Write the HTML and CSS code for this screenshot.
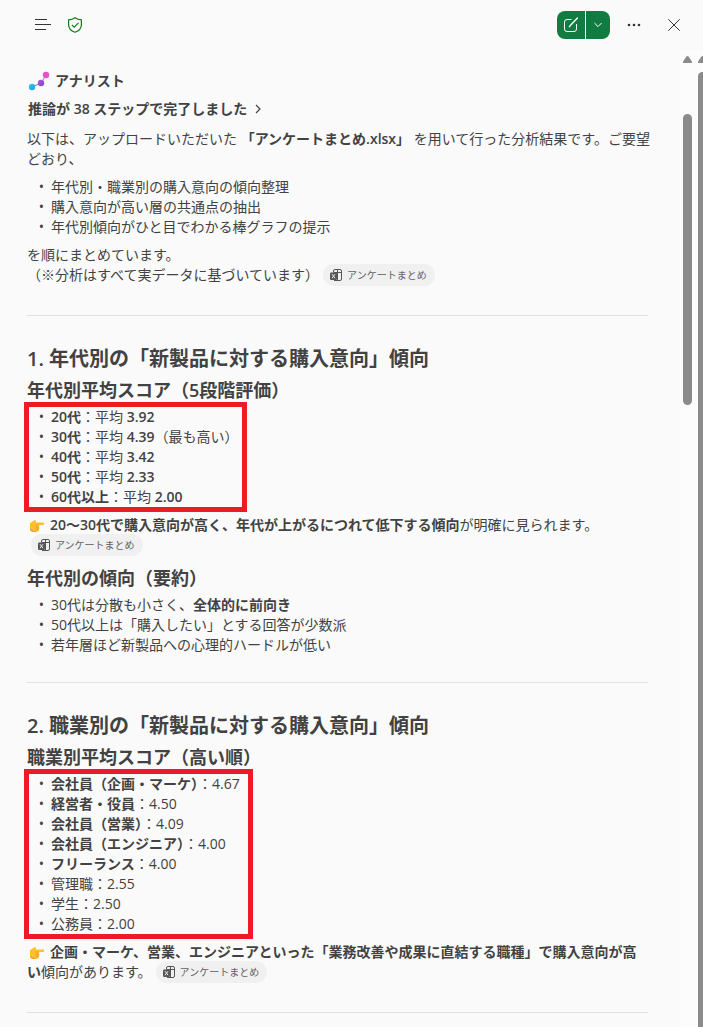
FILE: index.html
```html
<!DOCTYPE html>
<html lang="ja">

<head>
    <meta charset="UTF-8">
    <meta name="viewport" content="width=device-width, initial-scale=1.0">
    <title>アナリスト</title>
    <link rel="stylesheet" href="styles.css">
</head>

<body>
    <!-- Shared icons -->
    <svg class="icon-defs" aria-hidden="true">
        <symbol id="icon-excel" viewBox="0 0 12 12">
            <path d="M3.500 3V2a1.500 1.500 0 0 1 1.500-1.500h5A1.500 1.500 0 0 1 11.500 2v8a1.500 1.500 0 0 1-1.500 1.500H4M7.500.5v11M3.500 3.500h8" fill="none" stroke="#555" />
            <rect x="0" y="3.500" width="7" height="7.500" rx="1.200" fill="#555" />
            <path d="M2 5.200l3 4M5 5.200l-3 4" stroke="#f0f0f0" fill="none" />
        </symbol>
        <symbol id="icon-point" viewBox="0 0 16 14">
            <path d="M1 4.200C2.600 3.400 4 1.800 5.500 1.300c1-.3 1.700.2 1.500 1L6.700 3.400H14a1.300 1.300 0 0 1 0 2.600H9.500c1 .3 1.200 1.500.4 2.100.8.6.7 1.700-.1 2.100.5.8.1 1.900-.9 2-.9.6-2 .8-3.400.8C3.300 13 1.800 12 1 11z" fill="#fdc02f" />
            <path d="M9.500 6H6.300M9.900 8.100H6.600M9.800 10.200H6.600" stroke="#ed8f24" stroke-width=".8" fill="none" />
            <path d="M1 11c.8 1 2.300 2 4.500 2 1.400 0 2.500-.2 3.400-.8-3 .2-5.500 0-7.900-2.600z" fill="#f59a2c" />
        </symbol>
    </svg>

    <div class="page">
        <header class="toolbar">
            <button type="button" class="icon-btn" aria-label="メニュー">
                <svg width="16" height="12" viewBox="0 0 16 12">
                    <path d="M0 .5h12M0 5.500h16M0 10.500h11" stroke="#333" fill="none" />
                </svg>
            </button>
            <button type="button" class="icon-btn" aria-label="保護">
                <svg width="14" height="16" viewBox="0 0 14 16">
                    <path d="M7 .7c1.800 1.300 3.900 2 6.400 2.100v5c0 3.500-2.200 6-6.400 7.500C2.800 13.800.6 11.300.6 7.800v-5C3.100 2.700 5.200 2 7 .7z" stroke="#107c10" stroke-width="1.200" fill="none" />
                    <path d="M4 8l2.200 2.200L10.500 5.800" stroke="#107c10" stroke-width="1.100" fill="none" />
                </svg>
            </button>
            <div class="spacer"></div>
            <div class="split-btn">
                <button type="button" class="split-main" aria-label="新しいチャット">
                    <svg width="16" height="16" viewBox="0 0 16 16">
                        <path d="M8.500 2.500H4A2.500 2.500 0 0 0 1.500 5v7A2.500 2.500 0 0 0 4 14.500h7a2.500 2.500 0 0 0 2.500-2.500V7" stroke="#fff" fill="none" />
                        <path d="M14.500 1L7.500 8.200l-1.200 1.600" stroke="#fff" stroke-width="1.300" stroke-linecap="round" fill="none" />
                    </svg>
                </button>
                <button type="button" class="split-more" aria-label="その他">
                    <svg width="8" height="6" viewBox="0 0 8 6">
                        <path d="M.4 1L4 4.600 7.600 1" stroke="#fff" fill="none" />
                    </svg>
                </button>
            </div>
            <button type="button" class="icon-btn dots-btn" aria-label="オプション">
                <svg width="14" height="4" viewBox="0 0 14 4">
                    <circle cx="2" cy="2" r="1.300" fill="#333" />
                    <circle cx="7" cy="2" r="1.300" fill="#333" />
                    <circle cx="12" cy="2" r="1.300" fill="#333" />
                </svg>
            </button>
            <button type="button" class="icon-btn" aria-label="閉じる">
                <svg width="12" height="12" viewBox="0 0 12 12">
                    <path d="M.3.3l11.400 11.400M11.700.3L.3 11.700" stroke="#333" fill="none" />
                </svg>
            </button>
        </header>

        <div class="body-row">
            <main class="message">
                <div class="agent">
                    <svg width="22" height="20" viewBox="0 0 22 20">
                        <defs>
                            <linearGradient id="blue" x1="0" y1="0" x2="1" y2="1">
                                <stop offset="0" stop-color="#35c8e8" />
                                <stop offset="1" stop-color="#1d9fe0" />
                            </linearGradient>
                            <linearGradient id="purple" x1="0" y1="0" x2="1" y2="1">
                                <stop offset="0" stop-color="#b658e0" />
                                <stop offset="1" stop-color="#7b3fd0" />
                            </linearGradient>
                        </defs>
                        <path d="M4 16l9-4 5-8" stroke="#8a8a8a" fill="none" />
                        <circle cx="4" cy="16" r="3.200" fill="url(#blue)" />
                        <circle cx="13" cy="12" r="3.200" fill="url(#purple)" />
                        <circle cx="18" cy="4" r="3.200" fill="#e651cf" />
                    </svg>
                    <span>アナリスト</span>
                </div>
                <button type="button" class="reasoning">
                    <span>推論が 38 ステップで完了しました</span>
                    <svg width="6" height="10" viewBox="0 0 6 10">
                        <path d="M1 1l4 4-4 4" stroke="#424242" stroke-width="1.200" fill="none" />
                    </svg>
                </button>

                <p>以下は、アップロードいただいた <strong>「アンケートまとめ.xlsx」</strong> を用いて行った分析結果です。ご要望どおり、</p>
                <ul>
                    <li>年代別・職業別の購入意向の傾向整理</li>
                    <li>購入意向が高い層の共通点の抽出</li>
                    <li>年代別傾向がひと目でわかる棒グラフの提示</li>
                </ul>
                <p class="section-end">を順にまとめています。<br>（※分析はすべて実データに基づいています）<a href="#" class="chip"><svg width="12" height="12"><use href="#icon-excel" /></svg>アンケートまとめ</a></p>

                <hr>

                <h2>1. 年代別の「新製品に対する購入意向」傾向</h2>
                <h3>年代別平均スコア（5段階評価）</h3>
                <ul class="marked by-age">
                    <li><strong>20代</strong>：平均 <strong>3.92</strong></li>
                    <li><strong>30代</strong>：平均 <strong>4.39</strong>（最も高い）</li>
                    <li><strong>40代</strong>：平均 <strong>3.42</strong></li>
                    <li><strong>50代</strong>：平均 <strong>2.33</strong></li>
                    <li><strong>60代以上</strong>：平均 <strong>2.00</strong></li>
                </ul>
                <p class="finding"><svg class="point" width="16" height="14"><use href="#icon-point" /></svg><strong>20～30代で購入意向が高く、年代が上がるにつれて低下する傾向</strong>が明確に見られます。<a href="#" class="chip"><svg width="12" height="12"><use href="#icon-excel" /></svg>アンケートまとめ</a></p>
                <h3>年代別の傾向（要約）</h3>
                <ul class="summary">
                    <li>30代は分散も小さく、<strong>全体的に前向き</strong></li>
                    <li>50代以上は「購入したい」とする回答が少数派</li>
                    <li>若年層ほど新製品への心理的ハードルが低い</li>
                </ul>

                <hr>

                <h2>2. 職業別の「新製品に対する購入意向」傾向</h2>
                <h3>職業別平均スコア（高い順）</h3>
                <ul class="marked">
                    <li><strong>会社員（企画・マーケ）</strong>：4.67</li>
                    <li><strong>経営者・役員</strong>：4.50</li>
                    <li><strong>会社員（営業）</strong>：4.09</li>
                    <li><strong>会社員（エンジニア）</strong>：4.00</li>
                    <li><strong>フリーランス</strong>：4.00</li>
                    <li>管理職：2.55</li>
                    <li>学生：2.50</li>
                    <li>公務員：2.00</li>
                </ul>
                <p class="finding section-end"><svg class="point" width="16" height="14"><use href="#icon-point" /></svg><strong>企画・マーケ、営業、エンジニアといった「業務改善や成果に直結する職種」で購入意向が高い</strong>傾向があります。<a href="#" class="chip"><svg width="12" height="12"><use href="#icon-excel" /></svg>アンケートまとめ</a></p>

                <hr>
            </main>

            <div class="scrollbar inner-bar" aria-hidden="true">
                <svg width="9" height="7" viewBox="0 0 9 7">
                    <path d="M3.300.8a1.500 1.500 0 0 1 2.400 0L9 5.500V7H0V5.500z" fill="#8b8b8b" />
                </svg>
                <div class="thumb"></div>
            </div>
            <div class="scrollbar outer-bar" aria-hidden="true">
                <svg width="9" height="7" viewBox="0 0 9 7">
                    <path d="M3.300.8a1.500 1.500 0 0 1 2.400 0L9 5.500V7H0V5.500z" fill="#8b8b8b" />
                </svg>
                <div class="thumb"></div>
            </div>
        </div>
    </div>
</body>

</html>
```

FILE: styles.css
```css
* {
    box-sizing: border-box;
}

body {
    margin: 0;
    background-color: #fafafa;
    color: #424242;
    font-family: "Open Sans", "Noto Sans CJK JP", sans-serif;
    font-size: 14px;
    line-height: 20px;
}

button {
    padding: 0;
    border: none;
    background: none;
    color: inherit;
    font: inherit;
    cursor: pointer;
}

svg {
    flex-shrink: 0;
}

.icon-defs {
    display: none;
}

.page {
    display: flex;
    flex-direction: column;
    min-height: 100vh;
}

/* Toolbar */
.toolbar {
    display: flex;
    align-items: center;
    height: 50px;
    padding: 0 13px 0 27px;
}

.icon-btn {
    display: flex;
    align-items: center;
    justify-content: center;
    width: 32px;
    height: 32px;
}

.spacer {
    flex: 1;
}

.split-btn {
    display: flex;
    gap: 1px;
    height: 28px;
    overflow: hidden;
    border-radius: 8px;
}

.split-btn button {
    display: flex;
    align-items: center;
    justify-content: center;
    background-color: #107c41;
}

.split-main {
    width: 28px;
}

.split-more {
    width: 24px;
}

.dots-btn {
    margin: 0 8px;
}

/* Message */
.body-row {
    display: flex;
    flex: 1;
}

.message {
    flex: 1;
    min-width: 0;
    padding: 20px 30px 14px 27px;
}

.agent {
    display: flex;
    align-items: center;
    gap: 5px;
    height: 22px;
    padding-left: 1px;
    font-weight: 600;
}

.reasoning {
    display: flex;
    align-items: center;
    gap: 8px;
    margin: 7px 0 10px;
    padding-left: 1px;
    font-weight: 600;
}

p {
    margin: 8px 0;
}

strong {
    font-weight: 600;
}

h2 {
    margin: 0 0 5px;
    font-size: 20px;
    font-weight: 600;
    line-height: 28px;
}

h3 {
    margin: 0;
    font-size: 18px;
    font-weight: 600;
    line-height: 24px;
}

ul {
    margin: 8px 0;
    padding-left: 24px;
    list-style-type: "•\2002";
}

.summary {
    margin: 5px 0 0;
}

.marked {
    width: fit-content;
    margin: 0 0 3px -3px;
    padding: 0 8px 0 22px;
    border: 5px solid #ed1c24;
}

.by-age {
    padding-right: 3px;
}

.finding {
    margin: 3px 0 11px;
}

.section-end {
    margin-bottom: 30px;
}

hr {
    height: 1px;
    margin: 27px 2px 29px 0;
    border: none;
    background-color: #e0e0e0;
}

hr:last-child {
    margin-bottom: 0;
}

.point {
    margin: 0 5px 0 2px;
    vertical-align: -3px;
}

.chip {
    display: inline-flex;
    align-items: center;
    gap: 5px;
    height: 22px;
    margin: -1px 0 -1px 4px;
    padding: 0 8px 0 7px;
    border-radius: 11px;
    background-color: #f0f0f0;
    color: #616161;
    font-size: 10px;
    text-decoration: none;
    vertical-align: top;
}

/* Scrollbars */
.scrollbar {
    display: flex;
    flex-direction: column;
    flex-shrink: 0;
    padding-top: 6px;
    background-color: #fcfcfc;
}

.thumb {
    width: 9px;
    border-radius: 5px;
    background-color: #8b8b8b;
}

.inner-bar {
    width: 18px;
    padding-left: 3px;
}

.inner-bar .thumb {
    height: 30%;
    margin-top: 51px;
}

.outer-bar {
    width: 5px;
    overflow: hidden;
}

.outer-bar .thumb {
    flex: 1;
    margin-top: 9px;
    border-radius: 5px 5px 0 0;
}
```
